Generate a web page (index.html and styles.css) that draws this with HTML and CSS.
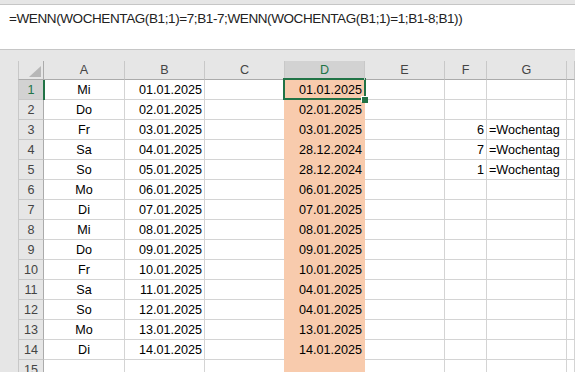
FILE: index.html
```html
<!DOCTYPE html>
<html lang="de">
<head>
  <meta charset="UTF-8" />
  <title>Wochentag - Excel</title>
  <link rel="stylesheet" href="styles.css">
</head>
<body>
  <div class="formelzeile">=WENN(WOCHENTAG(B1;1)=7;B1-7;WENN(WOCHENTAG(B1;1)=1;B1-8;B1))</div>

  <div class="blatt" id="blatt">
    <div class="auswahl"></div>
    <div class="ziehpunkt"></div>
  </div>

  <script>
    const blatt = document.getElementById("blatt");
    const spalten = ["A", "B", "C", "D", "E", "F", "G", ""];

    const tage = ["Mi", "Do", "Fr", "Sa", "So", "Mo", "Di", "Mi", "Do", "Fr", "Sa", "So", "Mo", "Di"];
    const ergebnis = [
      "01.01.2025", "02.01.2025", "03.01.2025", "28.12.2024", "28.12.2024",
      "06.01.2025", "07.01.2025", "08.01.2025", "09.01.2025", "10.01.2025",
      "04.01.2025", "04.01.2025", "13.01.2025", "14.01.2025"
    ];
    const hilfe = {
      3: ["6", "=Wochentag"],
      4: ["7", "=Wochentag"],
      5: ["1", "=Wochentag"]
    };

    function zelle(text, klasse) {
      const div = document.createElement("div");
      div.className = "zelle " + klasse;
      div.textContent = text;
      blatt.appendChild(div);
      return div;
    }

    // Kopfzeile
    const ecke = zelle("", "kopf ecke");
    ecke.innerHTML = '<svg width="12" height="11" viewBox="0 0 12 11"><polygon points="12,0 12,11 0,11" fill="#b7b7b7"/></svg>';
    spalten.forEach(s => zelle(s, s === "D" ? "kopf aktiv" : "kopf"));

    // Zeilen 1 bis 15
    for (let i = 1; i <= 15; i++) {
      const leer = i > 14;
      const datum = String(i).padStart(2, "0") + ".01.2025";
      const extra = hilfe[i] || ["", ""];

      zelle(i, i === 1 ? "zeilenkopf aktiv" : "zeilenkopf");
      zelle(leer ? "" : tage[i - 1], "mitte");
      zelle(leer ? "" : datum, "rechts");
      zelle("", "vor-fuellung");
      zelle(leer ? "" : ergebnis[i - 1], "rechts fuellung");
      zelle("", "");
      zelle(extra[0], "rechts");
      zelle(extra[1], "");
      zelle("", "");
    }
  </script>
</body>
</html>
```

FILE: styles.css
```css
* {
  box-sizing: border-box;
}

body {
  margin: 0;
  height: 372px;
  overflow: hidden;
  background-color: #e6e6e6;
  font-family: "Liberation Sans", Arial, sans-serif;
  color: #000;
}

.formelzeile {
  margin-top: 4px;
  height: 46px;
  padding: 5px 9px;
  background-color: #fff;
  border-top: 1px solid #c6c6c6;
  border-bottom: 1px solid #c6c6c6;
  font-size: 13.5px;
  letter-spacing: -0.4px;
  line-height: 18px;
  color: #222;
  white-space: nowrap;
}

.blatt {
  position: relative;
  margin: 11px 0 0 18px;
  display: grid;
  grid-template-columns: 26px 81px 80px 80px 80px 80px 42px 80px 1fr;
  grid-template-rows: 19px;
  grid-auto-rows: 20px;
  font-size: 12.6px;
}

.zelle {
  padding: 2px 2px 0;
  line-height: 17px;
  background-color: #fff;
  border-right: 1px solid #d4d4d4;
  border-bottom: 1px solid #d4d4d4;
  white-space: nowrap;
  overflow: hidden;
}

.mitte {
  text-align: center;
}

.rechts {
  text-align: right;
}

.kopf {
  padding: 0;
  line-height: 18px;
  text-align: center;
  color: #444;
  background-color: #e6e6e6;
  border-right-color: #c8c8c8;
  border-bottom-color: #ababab;
}

.ecke {
  display: flex;
  justify-content: flex-end;
  align-items: flex-end;
  padding: 0 2px 2px 0;
  border-left: 1px solid #c8c8c8;
  border-right-color: #ababab;
}

.ecke svg {
  display: block;
}

.zeilenkopf {
  padding: 2px 0 0;
  text-align: center;
  color: #444;
  background-color: #e6e6e6;
  border-left: 1px solid #c8c8c8;
  border-right-color: #ababab;
  border-bottom-color: #c8c8c8;
}

.aktiv {
  position: relative;
  overflow: visible;
  background-color: #d2d2d2;
  color: #217346;
}

.zeilenkopf.aktiv::after {
  content: "";
  position: absolute;
  top: 0;
  right: -2px;
  width: 2px;
  height: 20px;
  background-color: #217346;
}

.kopf.aktiv::after {
  content: "";
  position: absolute;
  left: 0;
  right: 0;
  bottom: -1px;
  height: 2px;
  background-color: #217346;
}

.fuellung {
  background-color: #f8cbad;
  border-right-color: #f8cbad;
  border-bottom-color: #f8cbad;
}

.vor-fuellung {
  border-right-color: #f8cbad;
}

.auswahl {
  position: absolute;
  left: 265px;
  top: 17px;
  width: 83px;
  height: 22px;
  border: 2px solid #217346;
}

.ziehpunkt {
  position: absolute;
  left: 344px;
  top: 36px;
  width: 6px;
  height: 6px;
  background-color: #217346;
  box-shadow: -1px -1px 0 0 #fff;
}
```
